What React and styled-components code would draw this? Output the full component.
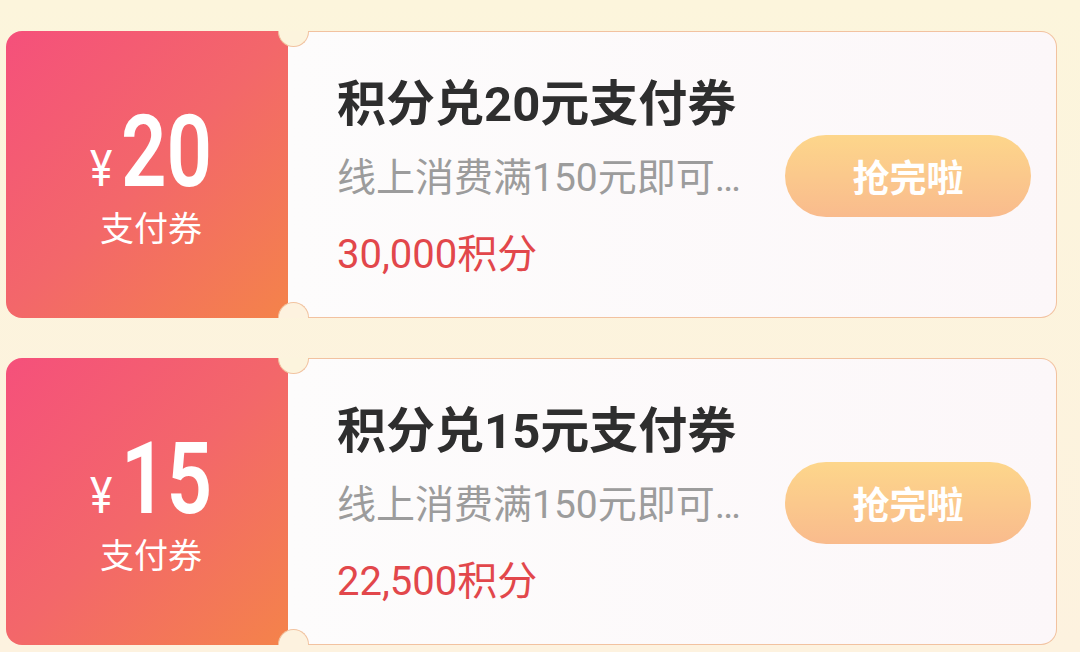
import React from "react";
import styled, { createGlobalStyle } from "styled-components";

const Global = createGlobalStyle`
  html, body {
    margin: 0;
    padding: 0;
    background: linear-gradient(180deg, #fcf5dc 0%, #fdf2df 100%);
    min-height: 652px;
    font-family: "Roboto", "Noto Sans CJK SC", sans-serif;
  }
  * { box-sizing: border-box; }
`;

const Page = styled.div`
  width: 1080px;
  height: 652px;
  padding: 31px 0 0 6px;
  display: flex;
  flex-direction: column;
  gap: 40px;
  overflow: hidden;
`;

const Card = styled.div`
  position: relative;
  width: 1051px;
  height: 287px;
  display: flex;
`;

const Face = styled.div`
  width: 282px;
  flex: none;
  border-radius: 16px 0 0 16px;
  background: linear-gradient(135deg, #f5507b 0%, #f3676a 50%, #f4834a 100%);
  color: #fff;
  display: flex;
  flex-direction: column;
  align-items: center;
  justify-content: flex-start;
  padding: 78px 0 0 8px;
`;

const Amount = styled.div`
  display: flex;
  align-items: baseline;
  height: 86px;
  line-height: 86px;
`;

const Yen = styled.span`
  font-size: 50px;
  line-height: 1;
  font-weight: 400;
  display: inline-block;
  transform: scaleX(0.85);
  margin-right: 7px;
`;

const Value = styled.span`
  font-size: 101px;
  line-height: 86px;
  font-weight: 600;
  display: inline-block;
  transform: scaleX(0.79);
  transform-origin: left center;
  margin-right: ${(p) => p.$shrink}px;
`;

const FaceLabel = styled.div`
  margin-top: 12px;
  font-size: 34px;
  line-height: 40px;
  font-family: "Noto Sans CJK SC", sans-serif;
`;

const Body = styled.div`
  flex: 1;
  display: flex;
  align-items: stretch;
  border: 1px solid #f2c2a0;
  border-left: none;
  border-radius: 0 16px 16px 0;
  background: linear-gradient(90deg, #fdfcfc 0%, #fcf7f9 100%);
`;

const Info = styled.div`
  flex: 1;
  min-width: 0;
  display: flex;
  flex-direction: column;
  padding: 43px 0 0 49px;
`;

const Title = styled.div`
  font-size: 49px;
  font-weight: 700;
  line-height: 60px;
  color: #2e2e2e;
  white-space: nowrap;
`;

const Desc = styled.div`
  margin-top: 19px;
  font-size: 39px;
  line-height: 48px;
  color: #9c9c9c;
  white-space: nowrap;
`;

const Points = styled.div`
  margin-top: 29px;
  font-size: 40px;
  line-height: 48px;
  color: #e2474b;
  white-space: nowrap;
`;

const Grab = styled.div`
  align-self: center;
  margin: 3px 25px 0 0;
  width: 246px;
  height: 82px;
  border-radius: 41px;
  background: linear-gradient(180deg, #fdd68b 0%, #f9bb8d 100%);
  color: #fff;
  font-size: 37px;
  font-weight: 700;
  font-family: "Noto Sans CJK SC", sans-serif;
  display: flex;
  align-items: center;
  justify-content: center;
`;

const Notch = styled.div`
  position: absolute;
  left: 272px;
  width: 31px;
  height: 16px;
  background: #fcf4dd;
  border: 1px solid #f1c3a0;
  ${(p) =>
    p.$side === "top"
      ? `top: 0; border-top: none; border-radius: 0 0 16px 16px;`
      : `bottom: 0; border-bottom: none; border-radius: 16px 16px 0 0; background: #fdf2df;`}
`;

const coupons = [
  { value: "20", points: "30,000" },
  { value: "15", points: "22,500" },
];

function Coupon({ value, points }) {
  return (
    <Card>
      <Face>
        <Amount>
          <Yen>¥</Yen>
          <Value $shrink={-23}>{value}</Value>
        </Amount>
        <FaceLabel>支付券</FaceLabel>
      </Face>
      <Body>
        <Info>
          <Title>积分兑{value}元支付券</Title>
          <Desc>线上消费满150元即可…</Desc>
          <Points>{points}积分</Points>
        </Info>
        <Grab>抢完啦</Grab>
      </Body>
      <Notch $side="top" />
      <Notch $side="bottom" />
    </Card>
  );
}

export default function App() {
  return (
    <>
      <Global />
      <Page>
        {coupons.map((c) => (
          <Coupon key={c.value} {...c} />
        ))}
      </Page>
    </>
  );
}
